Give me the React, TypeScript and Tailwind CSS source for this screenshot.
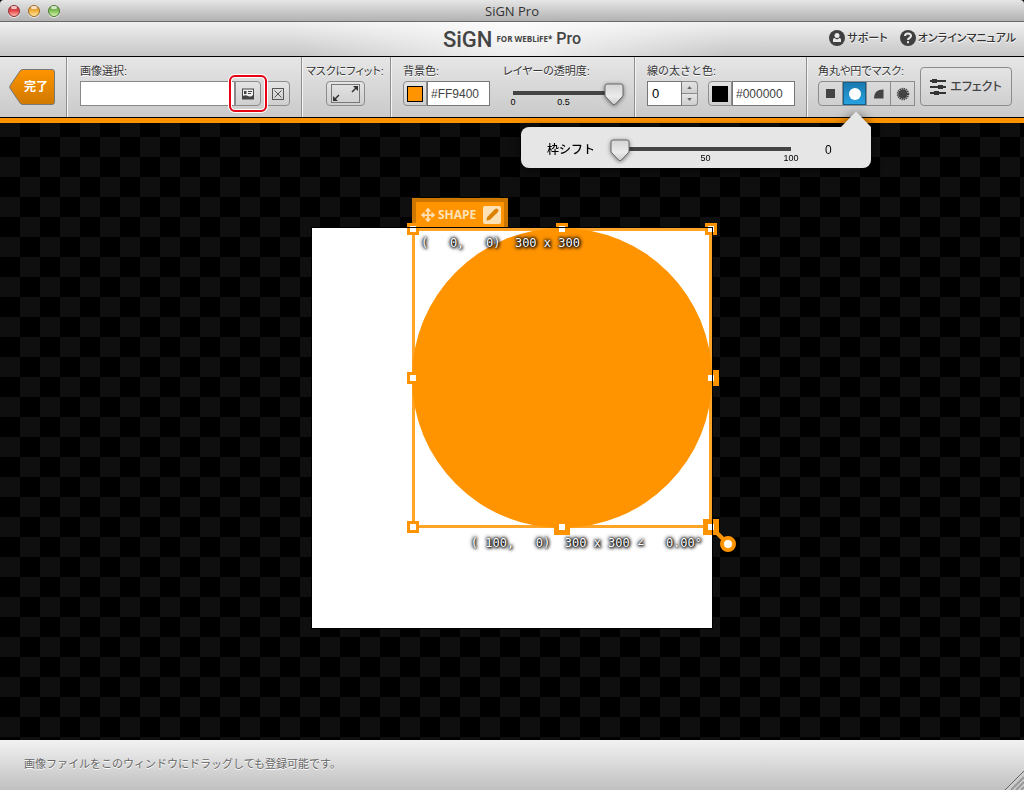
import React, { useState } from "react";
import { Move, Pencil } from "lucide-react";

const buttonStyle = "flex items-center justify-center border border-[#8c8c8c] bg-gradient-to-b from-[#e4e4e4] to-[#cfcfcf] text-[#444]";

interface SectionProps {
    className?: string;
    children: React.ReactNode;
}

function Section({ className = "", children }: SectionProps) {
    return (
        <div className={`flex shrink-0 border-r border-[#8f8f8f] shadow-[1px_0_0_#f4f4f4] pt-2 ${className}`}>
            {children}
        </div>
    );
}

interface FieldProps {
    label: string;
    htmlFor?: string;
    className?: string;
    children: React.ReactNode;
}

function Field({ label, htmlFor, className = "", children }: FieldProps) {
    return (
        <div className={className}>
            <label
                htmlFor={htmlFor}
                className="block h-4 whitespace-nowrap text-[11px] leading-3 text-[#333] [text-shadow:0_1px_0_#fff]"
            >
                {label}
            </label>
            {children}
        </div>
    );
}

interface SliderProps {
    id: string;
    max: number;
    step: number;
    initial: number;
    ticks: { at: number; text: string }[];
    className?: string;
}

function Slider({ id, max, step, initial, ticks, className = "" }: SliderProps) {
    const [value, setValue] = useState(initial);

    return (
        <div className={`relative h-6 ${className}`}>
            <div className="absolute inset-x-0 top-2 h-1 bg-[#444]" />
            {ticks.map((tick) => (
                <span
                    key={tick.text}
                    className="absolute top-[14px] -translate-x-1/2 text-[9px] leading-[10px] text-black"
                    style={{ left: `${tick.at}%` }}
                >
                    {tick.text}
                </span>
            ))}
            <svg
                viewBox="0 0 20 23"
                className="absolute top-0 h-[23px] w-5 -translate-x-1/2 drop-shadow-[0_1px_2px_rgba(0,0,0,0.5)]"
                style={{ left: `${(value / max) * 100}%` }}
            >
                <defs>
                    <linearGradient id={`${id}-thumb`} x1="0" y1="0" x2="0" y2="1">
                        <stop offset="0" stopColor="#d4d4d4" />
                        <stop offset="0.6" stopColor="#ebebeb" />
                        <stop offset="1" stopColor="#cccccc" />
                    </linearGradient>
                </defs>
                <path
                    d="M3 1h14q2 0 2 2v9q0 1-1 2l-6.500 7q-1.500 1.500-3 0L2 14q-1-1-1-2V3q0-2 2-2z"
                    fill={`url(#${id}-thumb)`}
                    stroke="#6a6a6a"
                />
            </svg>
            <input
                id={id}
                type="range"
                min={0}
                max={max}
                step={step}
                value={value}
                onChange={(e) => setValue(Number(e.target.value))}
                className="absolute inset-0 w-full cursor-pointer opacity-0"
            />
        </div>
    );
}

function ColorField({ id, value, swatch }: { id: string; value: string; swatch: string }) {
    return (
        <div className="flex h-[25px]">
            <button type="button" aria-label={value} className={`w-6 rounded-l ${buttonStyle}`}>
                <span className={`size-4 border border-black ${swatch}`} />
            </button>
            <input
                id={id}
                defaultValue={value}
                className="w-[63px] border border-[#777] bg-white px-[3px] text-xs text-[#444]"
            />
        </div>
    );
}

function TitleBar() {
    const lights = [
        "border-[#8e2f30] from-[#b5393c] via-[#e5484b] to-[#ffb5b0]",
        "border-[#9b6a26] from-[#d78a32] via-[#f2b23e] to-[#ffe6a0]",
        "border-[#4d7a32] from-[#5f9b3f] via-[#85c25b] to-[#d5f5b0]",
    ];

    return (
        <div className="relative flex h-[22px] shrink-0 items-center justify-center rounded-t border-b border-[#696969] bg-gradient-to-b from-[#e6e6e6] to-[#b2b2b2]">
            <div className="absolute left-2 flex gap-2">
                {lights.map((light) => (
                    <span key={light} className={`relative size-3 rounded-full border bg-gradient-to-b shadow-[0_1px_0_#eee] ${light}`}>
                        <span className="absolute inset-x-[2px] top-0 h-[3px] rounded-full bg-white/70" />
                    </span>
                ))}
            </div>
            <span className="font-['Open_Sans'] text-[13px] leading-5 text-[#333]">SiGN Pro</span>
        </div>
    );
}

function Header() {
    return (
        <header className="relative flex h-[35px] shrink-0 items-center justify-center border-b border-black bg-gradient-to-b from-[#f0f0f0] to-[#c6c6c6]">
            <div className="absolute inset-0 bg-[radial-gradient(circle_at_50%_0,rgba(255,255,255,0.8),transparent_220px)]" />
            <h1 className="relative flex items-center gap-1 font-['Roboto'] text-[#444]">
                <span className="text-[22px] font-medium">SiGN</span>
                <span className="font-['Open_Sans'] text-[8px] font-bold">FOR WEBLiFE*</span>
                <span className="text-base font-medium">Pro</span>
            </h1>
            <nav className="absolute right-2 top-2 flex gap-3 text-[11px] leading-4 font-medium text-[#333] [font-feature-settings:'palt'] [text-shadow:0_1px_0_#fff]">
                <a href="#support" className="flex items-center gap-[2px]">
                    <svg viewBox="0 0 16 16" className="size-4">
                        <circle cx="8" cy="8" r="8" fill="#3f3f3f" />
                        <circle cx="8" cy="5.500" r="2.500" fill="#e8e8e8" />
                        <path d="M4 12V9.500Q4 8 5.500 8L8 9.500 10.500 8Q12 8 12 9.500V12z" fill="#e8e8e8" />
                    </svg>
                    サポート
                </a>
                <a href="#manual" className="flex items-center gap-[2px]">
                    <svg viewBox="0 0 16 16" className="size-4">
                        <circle cx="8" cy="8" r="8" fill="#3f3f3f" />
                        <path d="M5 6Q5 3.500 8 3.500T11 6Q11 7.200 9.500 8T8 10" fill="none" stroke="#e8e8e8" strokeWidth="2" />
                        <rect x="7" y="11.200" width="2" height="2" fill="#e8e8e8" />
                    </svg>
                    オンラインマニュアル
                </a>
            </nav>
        </header>
    );
}

function ShiftPopover() {
    return (
        <div className="absolute right-11 top-[46px] z-20 w-[350px] drop-shadow-[0_2px_6px_rgba(0,0,0,0.7)] [font-feature-settings:normal]">
            <svg viewBox="0 0 30 17" className="absolute -top-4 right-0 h-[17px] w-[30px]">
                <path d="M0 17V16L15 0.500 30 16V17z" fill="#e6e6e6" />
            </svg>
            <div className="flex h-[41px] items-center rounded-lg rounded-tr-none bg-[#e6e6e6] pl-[26px] pt-1 text-black">
                <label htmlFor="shift" className="w-[73px] text-xs font-medium">枠シフト</label>
                <Slider
                    id="shift"
                    max={100}
                    step={1}
                    initial={0}
                    ticks={[{ at: 50, text: "50" }, { at: 100, text: "100" }]}
                    className="mt-[2px] w-[171px]"
                />
                <output htmlFor="shift" className="ml-[34px] text-xs">0</output>
            </div>
        </div>
    );
}

function MaskButtons() {
    const [active, setActive] = useState(1);
    const shapes = [
        { name: "四角", icon: <rect x="3" y="3" width="9" height="9" /> },
        { name: "円", icon: <circle cx="8" cy="8" r="6" /> },
        { name: "角丸", icon: <path d="M3 12.500V11.500Q3.500 3.500 12 3.500H12.500V12.500z" /> },
        {
            name: "星",
            icon: (
                <>
                    <circle cx="8" cy="8" r="4.500" />
                    <circle cx="8" cy="8" r="5" fill="none" stroke="currentColor" strokeWidth="2.500" strokeDasharray="1.200 0.760" />
                </>
            ),
        },
    ];

    return (
        <div className="relative flex h-[25px] w-[97px]">
            {shapes.map((shape, i) => (
                <button
                    key={shape.name}
                    type="button"
                    aria-label={shape.name}
                    onClick={() => setActive(i)}
                    className={`flex flex-1 items-center justify-center border border-l-0 border-[#8c8c8c] first:rounded-l first:border-l last:rounded-r ${
                        active === i
                            ? "bg-gradient-to-b from-[#1878ad] to-[#29a4e2] text-white shadow-[inset_0_0_0_1px_#14608c]"
                            : "text-[#444]"
                    }`}
                >
                    <svg viewBox="0 0 16 16" className="size-4 fill-current">{shape.icon}</svg>
                </button>
            ))}
            <ShiftPopover />
        </div>
    );
}

function Toolbar() {
    return (
        <div className="flex h-[61px] shrink-0 border-b border-black bg-gradient-to-b from-[#e6e6e6] to-[#cacaca]">
            <Section className="w-[67px] pl-[9px]">
                <button type="button" className="relative mt-1 h-9 w-[46px] pl-2 text-xs font-bold text-white">
                    <svg viewBox="0 0 46 36" className="absolute inset-0 size-full">
                        <defs>
                            <linearGradient id="done" x1="0" y1="0" x2="0" y2="1">
                                <stop offset="0" stopColor="#ff9400" />
                                <stop offset="1" stopColor="#cf7800" />
                            </linearGradient>
                        </defs>
                        <path
                            d="M14 .500H43q2.500 0 2.500 2.500V33q0 2.500-2.500 2.500H14q-2 0-3-1.500L1.200 19.500q-1-1.500 0-3L11 2q1-1.500 3-1.500z"
                            fill="url(#done)"
                            stroke="#777"
                        />
                    </svg>
                    <span className="relative">完了</span>
                </button>
            </Section>

            <Section className="w-[235px] pl-[13px]">
                <Field label="画像選択:" htmlFor="image">
                    <div className="flex h-[25px]">
                        <input id="image" className="w-[155px] border border-[#888] bg-white px-1 text-xs" />
                        <div className="relative">
                            <button type="button" aria-label="画像を選ぶ" className={`h-full w-[26px] rounded-r ${buttonStyle}`}>
                                <svg viewBox="0 0 12 12" className="size-3">
                                    <rect x=".500" y="1" width="11" height="10" fill="#eee" stroke="#444" />
                                    <path d="M2 3h2.500v3H2zM6 3h4v1H6zM6 5h3v1H6zM1 8Q3 6.500 6 8T11 7V11H1z" fill="#444" />
                                </svg>
                            </button>
                            <span className="pointer-events-none absolute -inset-[6px] rounded-md border-2 border-[#e60012] shadow-[0_0_0_1px_#fff,inset_0_0_0_1px_#fff]" />
                        </div>
                        <button type="button" aria-label="画像を消す" className={`ml-1 w-[25px] rounded ${buttonStyle}`}>
                            <svg viewBox="0 0 12 12" className="size-3" fill="none" stroke="#555">
                                <rect x=".500" y=".500" width="11" height="11" />
                                <path d="M2.500 2.500l7 7M9.500 2.500l-7 7" />
                            </svg>
                        </button>
                    </div>
                </Field>
            </Section>

            <Section className="w-[89px] justify-center pr-[2px]">
                <Field label="マスクにフィット:" className="flex flex-col items-center [font-feature-settings:'palt']">
                    <button type="button" aria-label="マスクにフィット" className={`h-[25px] w-[39px] rounded ${buttonStyle}`}>
                        <svg viewBox="0 0 29 19" className="h-[19px] w-[29px]" fill="none" stroke="#777">
                            <rect x=".500" y=".500" width="28" height="18" />
                            <path d="M22 2h5v5zM2 12v5h5z" fill="#333" stroke="none" />
                            <path d="M21 8l4-4M4 15l4-4" stroke="#333" strokeWidth="1.500" />
                        </svg>
                    </button>
                </Field>
            </Section>

            <Section className="w-[244px] pl-3">
                <Field label="背景色:" htmlFor="background" className="w-[100px]">
                    <ColorField id="background" value="#FF9400" swatch="bg-[#ff9400]" />
                </Field>
                <Field label="レイヤーの透明度:" htmlFor="opacity" className="[font-feature-settings:'palt']">
                    <Slider
                        id="opacity"
                        max={1}
                        step={0.1}
                        initial={1}
                        ticks={[{ at: 0, text: "0" }, { at: 50, text: "0.5" }]}
                        className="ml-[10px] mt-[2px] w-[101px]"
                    />
                </Field>
            </Section>

            <Section className="w-[172px] pl-3">
                <Field label="線の太さと色:" htmlFor="stroke">
                    <div className="flex h-[25px]">
                        <input id="stroke" defaultValue="0" className="w-[35px] border border-[#777] bg-white px-1 text-[13px] text-black" />
                        <div className="mr-[10px] flex w-4 flex-col">
                            <button type="button" aria-label="増やす" className={`flex-1 rounded-tr border-l-0 ${buttonStyle}`}>
                                <svg viewBox="0 0 6 4" className="h-[3px] w-[5px]"><path d="M0 4L3 0l3 4z" fill="#666" /></svg>
                            </button>
                            <button type="button" aria-label="減らす" className={`flex-1 rounded-br border-l-0 border-t-0 ${buttonStyle}`}>
                                <svg viewBox="0 0 6 4" className="h-[3px] w-[5px]"><path d="M0 0L3 4l3-4z" fill="#666" /></svg>
                            </button>
                        </div>
                        <ColorField id="stroke-color" value="#000000" swatch="bg-black" />
                    </div>
                </Field>
            </Section>

            <div className="flex flex-1 pl-[11px] pt-2">
                <Field label="角丸や円でマスク:" className="w-[102px] [font-feature-settings:'palt']">
                    <MaskButtons />
                </Field>
                <button
                    type="button"
                    className={`mt-[2px] h-[39px] w-[92px] gap-1 rounded text-xs font-medium [font-feature-settings:'palt'] ${buttonStyle}`}
                >
                    <svg viewBox="0 0 16 18" className="h-[18px] w-4" fill="#333">
                        <path d="M0 2h16v2H0zM0 8h16v2H0zM0 14h16v2H0z" />
                        <path d="M2 1h5v4H2zM8 7h5v4H8zM4 13h5v4H4z" />
                    </svg>
                    エフェクト
                </button>
            </div>
        </div>
    );
}

const readout = "absolute whitespace-pre font-['DejaVu_Sans_Mono'] text-xs leading-4 text-white [text-shadow:0_0_2px_#000,1px_1px_3px_#000,0_0_4px_#000,0_0_4px_#000]";
const smallHandle = "absolute size-3 -translate-x-1/2 -translate-y-1/2 border-[3px] border-[#ff9400] bg-white";
const largeHandle = "absolute size-4 -translate-x-1/2 -translate-y-1/2 border-[5px] border-[#ff9400] bg-white";

function Artboard() {
    return (
        <div className="relative mx-auto size-[400px] bg-white">
            <div className="absolute left-[100px] top-0 size-[300px]">
                <div className="size-full rounded-full bg-[#ff9400]" />
                <div className="absolute inset-0 border-[3px] border-[#ff9400]/85" />

                <div className="absolute -top-[30px] left-0 flex h-[29px] w-24 items-center border-4 border-b-0 border-[#ce7700] bg-[#ff9400] pl-[5px] text-[#ffe1b6]">
                    <Move size={14} strokeWidth={3} />
                    <span className="ml-[3px] flex-1 font-['Open_Sans'] text-xs font-bold">SHAPE</span>
                    <button type="button" aria-label="編集" className="mr-[3px] flex size-[18px] items-center justify-center rounded-xs bg-[#ffe1b6] text-[#dc8000]">
                        <Pencil size={13} className="fill-current" />
                    </button>
                </div>

                <p className={`left-[9px] top-[7px] ${readout}`}>{"(   0,   0)  300 x 300"}</p>
                <p className={`right-[10px] top-[307px] ${readout}`}>{"( 100,   0)  300 x 300 ∠   0.00°"}</p>

                <svg viewBox="0 0 32 32" className="absolute -bottom-[25px] -right-[25px] size-8">
                    <path d="M6 6l17 17" stroke="#ff9400" strokeWidth="4" />
                    <circle cx="23" cy="23" r="6" fill="#fff" stroke="#ff9400" strokeWidth="4" />
                </svg>

                <span className={`left-px top-px ${smallHandle}`} />
                <span className={`left-1/2 top-px ${smallHandle}`} />
                <span className={`left-[299px] top-px ${smallHandle}`} />
                <span className={`left-px top-1/2 ${smallHandle}`} />
                <span className={`left-[299px] top-1/2 ${largeHandle}`} />
                <span className={`left-px top-[299px] ${smallHandle}`} />
                <span className={`left-1/2 top-[299px] ${largeHandle}`} />
                <span className={`left-[299px] top-[299px] ${largeHandle}`} />
            </div>
            <div className="pointer-events-none absolute inset-0 ring-1 ring-black" />
        </div>
    );
}

export default function App() {
    return (
        <div className="flex min-h-screen flex-col bg-black font-['Liberation_Sans','Noto_Sans_CJK_JP',sans-serif]">
            <TitleBar />
            <Header />
            <Toolbar />
            <div className="h-[5px] shrink-0 bg-[#ff9400]" />
            <main className="flex-1 bg-[repeating-conic-gradient(#0f0f0f_0_25%,#000_0_50%)] bg-[length:40px_40px] bg-[position:20px_-6px] pb-24 pt-[105px]">
                <Artboard />
            </main>
            <footer className="relative h-[50px] shrink-0 bg-gradient-to-b from-[#f2f2f2] to-[#c0c0c0] pl-6 pt-4">
                <p className="text-[11px] leading-4 text-[#666] [text-shadow:0_1px_0_#fff]">
                    画像ファイルをこのウィンドウにドラッグしても登録可能です。
                </p>
                <svg viewBox="0 0 19 19" className="absolute bottom-0 right-0 size-[19px]">
                    <path d="M0 19L19 0V19z" fill="#ccc" />
                    <path d="M0 19L19 0" stroke="#666" />
                    <path d="M6 19L19 6M11 19L19 11M16 19l3-3" stroke="#999" strokeWidth="2" />
                </svg>
            </footer>
        </div>
    );
}
